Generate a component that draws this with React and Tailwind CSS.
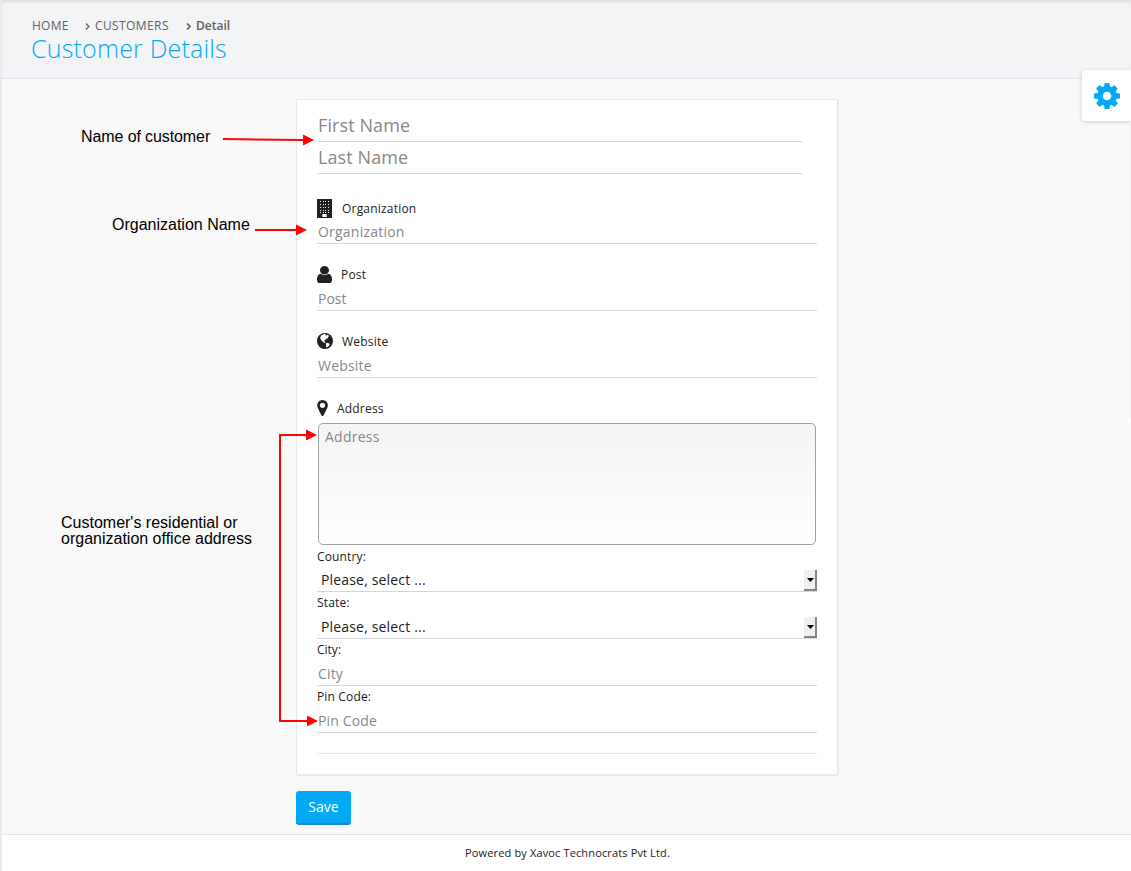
import React from 'react';

const USER =
  'M1536 1399q0 109-62.5 187t-150.5 78h-854q-88 0-150.5-78t-62.5-187q0-85 8.5-160.5t31.5-152 58.5-131 94-89 134.5-34.5q131 128 313 128t313-128q76 0 134.5 34.5t94 89 58.5 131 31.5 152 8.5 160.5zm-256-887q0 159-112.5 271.5t-271.5 112.5-271.5-112.5-112.5-271.5 112.5-271.5 271.5-112.5 271.5 112.5 112.5 271.5z';
const MARKER =
  'M1152 640q0-106-75-181t-181-75-181 75-75 181 75 181 181 75 181-75 75-181zm256 0q0 109-33 179l-364 774q-16 33-47.5 52t-67.5 19-67.5-19-46.5-52l-365-774q-33-70-33-179 0-212 150-362t362-150 362 150 150 362z';
const COG =
  'M1152 896q0-106-75-181t-181-75-181 75-75 181 75 181 181 75 181-75 75-181zm512-109v222q0 12-8 23t-20 13l-185 28q-19 54-39 91 35 50 107 138 10 12 10 25t-9 23q-27 37-99 108t-94 71q-12 0-26-9l-138-108q-44 23-91 38-16 136-29 186-7 28-36 28h-222q-14 0-24.5-8.5t-11.5-21.5l-28-184q-49-16-90-37l-141 107q-10 9-25 9-14 0-25-11-126-114-165-168-7-10-7-23 0-12 8-23 15-21 51-66.5t54-70.5q-27-50-41-99l-183-27q-13-2-21-12.5t-8-23.5v-222q0-12 8-23t19-13l186-28q14-46 39-92-40-57-107-138-10-12-10-24 0-10 9-23 26-36 98.5-107.5t94.5-71.5q13 0 26 10l138 107q44-23 91-38 16-136 29-186 7-28 36-28h222q14 0 24.5 8.5t11.5 21.5l28 184q49 16 90 37l142-107q9-9 24-9 13 0 25 10 129 119 165 170 7 8 7 22 0 12-8 23-15 21-51 66.5t-54 70.5q26 50 41 98l183 28q13 2 21 12.5t8 23.5z';

function BuildingIcon() {
  const rows = [2, 5, 8, 11, 13];
  const cols = [3, 6, 8, 11];
  return (
    <svg className="h-[19px] w-[15px]" viewBox="0 0 15 19">
      <rect width="15" height="19" fill="#212121" />
      {rows.map((y) =>
        cols.map((x) => <rect key={`${x}-${y}`} x={x} y={y} width="1" height="1" fill="#f0ece0" />)
      )}
      <rect x="5.3" y="15" width="4.4" height="3" fill="#fff" />
    </svg>
  );
}

function GlobeIcon() {
  return (
    <svg className="-mt-px h-4 w-4" viewBox="0 0 16 16">
      <circle cx="8" cy="8" r="8" fill="#212121" />
      <path
        d="M3 4.2 4.6 2.2 7.2 1.100 8.800 1.100 8.200 2.200 9.600 2.600 10.800 1.800 12.200 3 10.800 4.200 11.200 5.200 9.600 5.400 8.600 6.600 7.400 7.600 7.600 8.800 8.800 9.600 7.600 10 5.800 8.800 4.400 7.600 3.600 5.800z"
        fill="#fff"
      />
      <path d="M8.8 10.600 10.200 9.800 12.200 10.400 12.800 11.400 11.600 13 10 14.200 9 14.500 9.200 12.800z" fill="#fff" />
    </svg>
  );
}

function Label({ icon, gap, children }) {
  return (
    <div className={`flex h-[27px] items-center text-[12px] tracking-[0.2px] text-[#212121] ${gap}`}>
      {icon}
      <span>{children}</span>
    </div>
  );
}

function Field({ text, className }) {
  return (
    <div className={`flex items-center border-b border-[#d6d6d6] pl-px text-[#888] ${className}`}>
      {text}
    </div>
  );
}

function Select({ className }) {
  return (
    <div
      className={`flex items-center justify-between border-b border-[#d6d6d6] pl-1 text-[14px] tracking-[0.17px] text-[#212121] ${className}`}
    >
      <span>Please, select ...</span>
      <span className="flex h-[21px] w-[13px] items-center justify-center self-end border-r-2 border-b-2 border-[#858585] bg-[#f0f0ef]">
        <svg className="ml-px h-1 w-[7px]" viewBox="0 0 7 4">
          <path d="M0 0h7L3.5 4z" fill="#000" />
        </svg>
      </span>
    </div>
  );
}

function Crumb({ children, bold }) {
  return (
    <span className={`flex items-center gap-[5px] ${bold ? 'font-semibold' : 'tracking-[0.4px]'}`}>
      <svg className="mt-px h-[7px] w-[5px]" viewBox="0 0 5 7">
        <path d="m1 .5 3 3-3 3" fill="none" stroke="#616161" strokeWidth={bold ? 1.7 : 1.2} />
      </svg>
      {children}
    </span>
  );
}

function Annotations() {
  return (
    <div className="absolute inset-0 font-['Liberation_Sans',Arial,sans-serif] text-[16px] leading-4 whitespace-nowrap text-black">
      <svg className="absolute inset-0" width="1131" height="871" viewBox="0 0 1131 871">
        <g fill="none" stroke="#fb0505" strokeWidth="2">
          <path d="M223 139 304 140" />
          <path d="M255 230h42" />
          <path d="M307 435h-27v286h28" />
        </g>
        <g fill="#fb0505">
          <path d="m303 134.5 11 5.5-11 5.5z" />
          <path d="m296 224.5 11 5.5-11 5.5z" />
          <path d="m306 429.5 11 5.5-11 5.5z" />
          <path d="m307 715.5 11 5.5-11 5.5z" />
        </g>
      </svg>
      <div className="absolute top-[129px] left-[81px] tracking-[-0.1px]">Name of customer</div>
      <div className="absolute top-[217px] left-[112px]">Organization Name</div>
      <div className="absolute top-[515px] left-[61px]">
        Customer's residential or
        <br />
        organization office address
      </div>
    </div>
  );
}

export default function App() {
  return (
    <div className="relative flex h-[871px] w-[1131px] flex-col overflow-hidden border-l-2 border-[#e8eaed] bg-[#f9f9f9] font-['Open_Sans',sans-serif]">
      <header className="h-[79px] shrink-0 border-b border-[#dfe3e7] bg-[#f3f4f6] pt-[18px] shadow-[inset_0_3px_3px_-1px_#dcdddf]">
        <nav className="flex h-4 items-center pl-[30px] text-[12px] leading-4 text-[#616161]">
          <span className="w-[53px] tracking-[0.25px]">HOME</span>
          <span className="w-[101px]">
            <Crumb>CUSTOMERS</Crumb>
          </span>
          <Crumb bold>Detail</Crumb>
        </nav>
        <h1 className="pl-[29px] text-[25px] leading-[28px] font-light tracking-[0.19px] text-[#03a9f4]">
          Customer Details
        </h1>
      </header>

      <main className="h-[755px] shrink-0 pt-5 pl-[294px]">
        <section className="h-[677px] w-[543px] rounded-[3px] border border-r-2 border-b-2 border-[#e9e9e9] bg-white px-5 pt-[10px]">
          <Field text="First Name" className="h-8 w-[485px] text-[18px] tracking-[0.1px]" />
          <Field text="Last Name" className="h-8 w-[485px] text-[18px] tracking-[0.1px]" />
          <div className="w-[500px] pt-[21px]">
            <Label icon={<BuildingIcon />} gap="gap-[10px]">Organization</Label>
            <Field text="Organization" className="h-[22px] pb-[3px] text-[14px] tracking-[0.22px]" />
          </div>
          <div className="w-[500px] pt-[17px]">
            <Label
              icon={
                <svg className="h-[17px] w-[15px]" viewBox="256 128 1280 1536" preserveAspectRatio="none" fill="#212121">
                  <path d={USER} />
                </svg>
              }
              gap="gap-[9px]"
            >
              Post
            </Label>
            <Field text="Post" className="h-[23px] pb-[2px] text-[14px]" />
          </div>
          <div className="w-[500px] pt-[17px]">
            <Label icon={<GlobeIcon />} gap="gap-[9px]">Website</Label>
            <Field text="Website" className="h-[23px] pb-[2px] text-[14px] tracking-[0.2px]" />
          </div>
          <div className="w-[500px] pt-[17px]">
            <Label
              icon={
                <svg className="-mt-px h-4 w-[11px]" viewBox="384 128 1024 1536" fill="#212121">
                  <path d={MARKER} />
                </svg>
              }
              gap="gap-[9px]"
            >
              Address
            </Label>
            <div className="mx-px mt-px h-[122px] rounded-[5px] border border-[#a0a0a0] bg-linear-to-b from-[#f4f4f4] to-white px-[6px] pt-[3px] text-[14px] leading-5 tracking-[0.24px] text-[#888]">
              Address
            </div>
          </div>
          <div className="w-[500px] text-[12px] tracking-[0.15px] text-[#212121]">
            <div className="flex h-[22px] items-center pt-px">Country:</div>
            <Select className="h-[25px]" />
            <div className="flex h-[21px] items-center">State:</div>
            <Select className="h-[26px] pt-px" />
            <div className="flex h-[21px] items-center tracking-normal">City:</div>
            <Field text="City" className="h-[26px] pt-[2px] text-[14px]" />
            <div className="flex h-[21px] items-center">Pin Code:</div>
            <Field text="Pin Code" className="h-[26px] pt-[2px] text-[14px]" />
            <hr className="mt-5 border-[#e6e6e6]" />
          </div>
        </section>
        <button className="mt-[15px] block h-[34px] w-[55px] rounded-[3px] border-b-2 border-[#1f86cc] bg-[#03a9f4] pb-[2px] text-[14px] text-white">
          Save
        </button>
      </main>

      <footer className="flex flex-1 items-center justify-center border-t border-[#e6e6e6] bg-white pl-[2px] text-[11px] tracking-[0.14px] text-[#212121]">
        Powered by Xavoc Technocrats Pvt Ltd.
      </footer>

      <div className="absolute top-[70px] right-0 flex h-[51px] w-[49px] items-center justify-center rounded-l-[3px] bg-white pl-px shadow-[0_1px_4px_rgba(0,0,0,0.18)]">
        <svg className="h-[26px] w-[26px]" viewBox="128 128 1536 1536" fill="#03a9f4">
          <path d={COG} />
        </svg>
      </div>
      <div className="absolute top-[121px] right-0 h-[298px] w-px bg-[#f0f0f0]" />
      <div className="pointer-events-none absolute inset-y-0 right-0 -left-[2px]">
        <Annotations />
      </div>
    </div>
  );
}
